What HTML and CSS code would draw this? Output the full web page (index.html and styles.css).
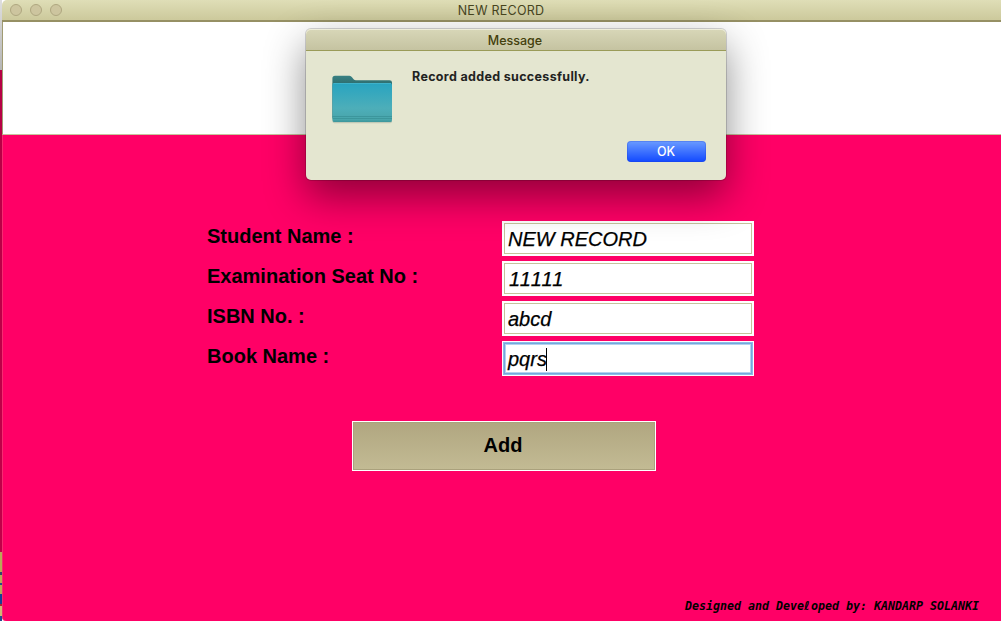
FILE: index.html
```html
<!DOCTYPE html>
<html lang="en">
<head>
<meta charset="utf-8">
<title>NEW RECORD</title>
<link rel="stylesheet" href="styles.css">
</head>
<body>
<div class="desktop">
  <div class="behind"></div>
  <main class="window">
    <header class="titlebar">
      <div class="lights"><i></i><i></i><i></i></div>
      <span class="title">NEW RECORD</span>
    </header>
    <section class="banner"></section>
    <section class="content">
      <form class="form">
        <span class="label">Student Name :</span>
        <div class="field"><span class="value">NEW RECORD</span></div>
        <span class="label">Examination Seat No :</span>
        <div class="field"><span class="value digits">11111</span></div>
        <span class="label">ISBN No. :</span>
        <div class="field"><span class="value">abcd</span></div>
        <span class="label">Book Name :</span>
        <div class="field focused"><span class="value">pqrs<i class="caret"></i></span></div>
      </form>
      <button class="add" type="button">Add</button>
      <footer class="credit">Designed and Deve<span class="script-l">ℓ</span>oped by: KANDARP SOLANKI</footer>
    </section>
  </main>
  <div class="dialog" role="dialog">
    <header class="dialog-title"><span>Message</span></header>
    <div class="dialog-body">
      <svg class="folder" width="64" height="52" viewBox="0 0 64 52">
        <defs>
          <linearGradient id="front" x1="0" y1="0" x2="0" y2="1">
            <stop offset="0" stop-color="#28a4c0"/>
            <stop offset=".65" stop-color="#4daeb9"/>
            <stop offset="1" stop-color="#47a3a7"/>
          </linearGradient>
          <linearGradient id="back" x1="0" y1="0" x2="0" y2="1">
            <stop offset="0" stop-color="#398183"/>
            <stop offset=".22" stop-color="#2c6c6d"/>
          </linearGradient>
        </defs>
        <rect x="2.5" y="10" width="59.5" height="41.2" rx="2" fill="#7d9288" opacity=".35"/>
        <path d="M2.4 46V6.2Q2.4 3.7 5 3.7H19.5Q21 3.7 22 5.2L23.6 7.3Q24.4 8.2 26 8.2H59.5Q62 8.2 62 10.5V46Z" fill="url(#back)"/>
        <path d="M2.4 13Q2.4 11 4.4 11H60Q62 11 62 13V48Q62 50 60 50H4.4Q2.4 50 2.4 48Z" fill="url(#front)"/>
        <path d="M3.5 11.5H61" stroke="#3eb2ca"/>
        <path d="M2.5 44.5H62M2.5 46.5H62M3 49.2H61.5" stroke="#338b90" stroke-width=".8" opacity=".75"/>
      </svg>
      <p class="message">Record added successfully.</p>
      <button class="ok" type="button">OK</button>
    </div>
  </div>
</div>
</body>
</html>
```
FILE: styles.css
```css
* { box-sizing: border-box; }
body { margin: 0; }
.desktop {
  position: relative;
  display: flex;
  width: 1001px;
  height: 621px;
  overflow: hidden;
  font-family: Inter, "Liberation Sans", sans-serif;
}
.behind {
  flex: 0 0 2px;
  background: linear-gradient(#dedede 0, #b6b6b6 70px, #b50045 70px, #c00049 552px, #b8a957 552px, #b8a957 572px, #31436f 572px, #31436f 575px, #b8a957 575px, #b8a957 583px, #24468f 583px, #24468f 585px, #b8a957 585px, #b8a957 594px, #173f96 594px, #173f96 604px, #a82536 604px, #a82536 606px, #d1b875 606px, #d1b875 616px, #274c8e 616px);
}
.window { flex: 1; display: flex; flex-direction: column; }
.titlebar {
  flex: 0 0 22px;
  min-height: 0;
  display: grid;
  grid-template-columns: 1fr auto 1fr;
  background: linear-gradient(#dfdeb7, #cdca9d 19px);
  border-bottom: 2px solid #969064;
  border-radius: 5px 0 0;
}
.lights { display: flex; gap: 8px; padding: 4px 0 0 8px; }
.lights i {
  width: 12px;
  height: 12px;
  border: 1px solid #afa780;
  border-radius: 50%;
  background: #cdc59f;
}
.title { margin-right: 1px; font-size: 12.5px; line-height: 21px; letter-spacing: .25px; color: #47451f; }
.banner {
  flex: 0 0 113px;
  background: #fff;
  border-left: 1px solid #a09b72;
  border-bottom: 1px solid #c7c39c;
}
.content {
  flex: 1;
  display: flex;
  flex-direction: column;
  background: #ff0066;
  border-left: 1px solid #f52b70;
  border-bottom-left-radius: 4px;
  padding: 86px 0 0 204px;
  font-family: "Liberation Sans", Arial, sans-serif;
  color: #000;
}
.form {
  display: grid;
  grid-template-columns: 295px 252px;
  grid-auto-rows: 35px;
  row-gap: 5px;
}
.label { font-size: 20px; font-weight: 700; line-height: 30px; white-space: nowrap; }
.field { background: #fff; padding: 2px; }
.value {
  display: flex;
  align-items: center;
  height: 31px;
  padding: 1px 0 0 3px;
  border: 1px solid #c6c29b;
  font-size: 20px;
  font-style: italic;
  -webkit-text-stroke: .25px #000;
}
.digits { letter-spacing: 1.2px; padding-left: 4px; }
.focused .value { border: 1px solid #74a9dc; box-shadow: 0 0 0 1px #8fbbe8, inset 0 0 0 1px #b4d2f0; }
.caret { width: 1px; height: 23px; margin-left: -1px; background: #000; }
.add {
  width: 304px;
  height: 50px;
  margin: 45px 0 0 145px;
  padding: 0 2px 2px 0;
  border: 1px solid #fff;
  border-radius: 0;
  background: linear-gradient(#b0a680, #c3bb94);
  box-shadow: inset 0 0 0 1px #aaa17c;
  font: 700 20px "Liberation Sans", Arial, sans-serif;
  color: #000;
}
.credit {
  height: 16px;
  margin: auto 22px 7px auto;
  font: italic 700 11.63px/16px "DejaVu Sans Mono", monospace;
  white-space: pre;
}
.script-l { display: inline-block; width: 7px; font: italic 700 12px/12px "DejaVu Sans", sans-serif; }
.dialog {
  position: absolute;
  left: 306px;
  top: 29px;
  width: 420px;
  height: 151px;
  display: flex;
  flex-direction: column;
  border-radius: 5px;
  background: #e4e6d0;
  box-shadow: 0 0 0 1px rgba(0,0,0,.16), 0 16px 40px rgba(0,0,0,.45);
}
.dialog-title {
  flex: 0 0 22px;
  min-height: 0;
  padding-right: 2px;
  text-align: center;
  font-size: 12.5px;
  font-weight: 500;
  line-height: 23px;
  color: #433f0c;
  background: linear-gradient(#d8d7b8, #c5c3a1);
  border-bottom: 1px solid #9a9b58;
  border-radius: 5px 5px 0 0;
  box-shadow: inset 0 1px #eeedda;
}
.dialog-body {
  flex: 1;
  display: grid;
  grid-template-columns: 64px 1fr;
  grid-template-rows: 69px 21px;
  column-gap: 18px;
  padding: 21px 20px 18px 24px;
}
.folder { grid-row: 1 / 3; }
.message { margin: -4px 0 0; font-size: 12.5px; font-weight: 700; line-height: 18px; letter-spacing: .33px; color: #22231f; }
.ok {
  grid-column: 2;
  justify-self: end;
  width: 79px;
  height: 21px;
  padding: 0 1px 0 0;
  border: 0;
  border-radius: 4px;
  background: linear-gradient(#6b9cff, #1148ff);
  box-shadow: inset 0 0 0 1px rgba(30,65,205,.25);
  font: 500 12.5px Inter, sans-serif;
  color: #fff;
}
```
